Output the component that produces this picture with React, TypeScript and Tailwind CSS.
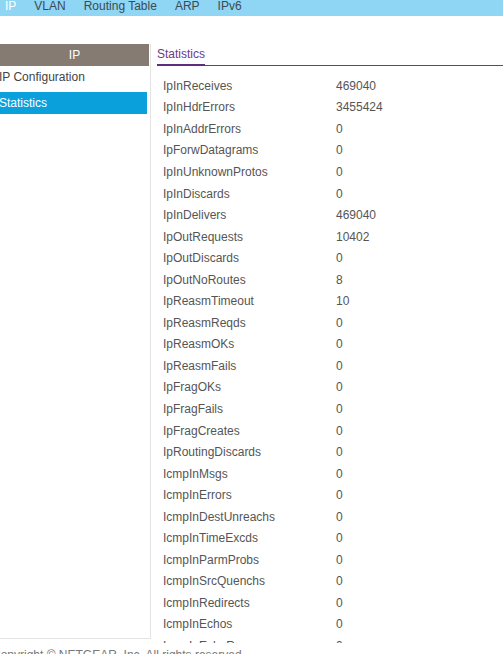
const navItems = ['IP', 'VLAN', 'Routing Table', 'ARP', 'IPv6'];

const stats: [string, string][] = [
  ['IpInReceives', '469040'],
  ['IpInHdrErrors', '3455424'],
  ['IpInAddrErrors', '0'],
  ['IpForwDatagrams', '0'],
  ['IpInUnknownProtos', '0'],
  ['IpInDiscards', '0'],
  ['IpInDelivers', '469040'],
  ['IpOutRequests', '10402'],
  ['IpOutDiscards', '0'],
  ['IpOutNoRoutes', '8'],
  ['IpReasmTimeout', '10'],
  ['IpReasmReqds', '0'],
  ['IpReasmOKs', '0'],
  ['IpReasmFails', '0'],
  ['IpFragOKs', '0'],
  ['IpFragFails', '0'],
  ['IpFragCreates', '0'],
  ['IpRoutingDiscards', '0'],
  ['IcmpInMsgs', '0'],
  ['IcmpInErrors', '0'],
  ['IcmpInDestUnreachs', '0'],
  ['IcmpInTimeExcds', '0'],
  ['IcmpInParmProbs', '0'],
  ['IcmpInSrcQuenchs', '0'],
  ['IcmpInRedirects', '0'],
  ['IcmpInEchos', '0'],
  ['IcmpInEchoReps', '0'],
  ['IcmpInTimestamps', '0'],
  ['IcmpInTimestampReps', '0'],
];

export default function App() {
  return (
    <div
      className="w-[503px] h-[654px] overflow-hidden bg-white text-[12px] text-[#555]"
      style={{ fontFamily: '"Liberation Sans", Arial, sans-serif' }}
    >
      {/* Top tabs */}
      <div className="h-[16px] bg-[#8fd5f4] flex items-start">
        <div className="flex -ml-[4px]">
          {navItems.map((item, i) => (
            <span
              key={item}
              className={`px-[9px] leading-[12px] ${i === 0 ? 'text-white' : 'text-[#3d4a52]'}`}
            >
              {item}
            </span>
          ))}
        </div>
      </div>

      <div className="mt-[28px] flex h-[599px]">
        {/* Sidebar */}
        <div className="w-[151px] h-[595px] shrink-0 border-r border-b border-[#e3e3e3]">
          <div className="h-[22px] mr-[1px] bg-[#857b73] text-white flex items-center justify-center">IP</div>
          <div className="h-[22px] flex items-center -ml-[1px] text-[#444]">IP Configuration</div>
          <div className="mt-[4px] h-[22px] mr-[3px] bg-[#0aa0dc] text-white flex items-center">
            <span className="-ml-[1px]">Statistics</span>
          </div>
        </div>

        {/* Content */}
        <div className="flex-1 overflow-hidden pl-[6px]">
          <div className="relative h-[22px] border-b border-[#6a3b88]">
            <span className="absolute left-0 top-[3px] pr-[3px] text-[#6a3b88] leading-[14px]">Statistics</span>
            <div className="absolute left-0 bottom-[-1px] w-[48px] h-[2px] bg-[#5e2d7d]" />
          </div>
          <div className="mt-[9px] pl-[6px]">
            {stats.map(([k, v]) => (
              <div key={k} className="flex h-[21.55px] items-center">
                <span className="w-[173px] shrink-0">{k}</span>
                <span>{v}</span>
              </div>
            ))}
          </div>
        </div>
      </div>

      <div className="mt-[4px] -ml-[8px] leading-[16px] text-[#777]">
        Copyright © NETGEAR, Inc. All rights reserved.
      </div>
    </div>
  );
}
